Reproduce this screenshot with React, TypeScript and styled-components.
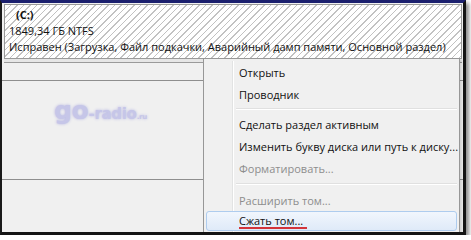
import styled, { createGlobalStyle } from "styled-components";

const GlobalStyle = createGlobalStyle`
  html, body {
    margin: 0;
    padding: 0;
    background: #ffffff;
  }
  body {
    font-family: "Open Sans", "Noto Sans", Arial, sans-serif;
  }
`;

const Frame = styled.div`
  position: relative;
  box-sizing: border-box;
  width: 466px;
  height: 235px;
  border-top: 3px solid #1c206e;
  border-left: 2px solid #1a1a1a;
  border-right: 3px solid #141414;
  border-bottom: 3px solid #141414;
  box-shadow: 3px 3px 4px rgba(0, 0, 0, 0.45);
  background: #f0f0f0;
  display: flex;
  flex-direction: column;
  overflow: hidden;
`;

const DiskBox = styled.div`
  margin: 1px 1px 0 2px;
  height: 55px;
  box-sizing: border-box;
  border: 1px solid #9a9a9a;
  padding: 2px 0 0 4px;
  background: repeating-linear-gradient(
    135deg,
    #ffffff 0 3.6px,
    #c2c2c2 3.6px 4.6px
  );
  color: #111;
  font-size: 11px;
  line-height: 16px;
`;

const DiskName = styled.div`
  font-weight: 700;
  padding-left: 7px;
`;

const DiskLine = styled.div`
  white-space: nowrap;
`;

const DiskFooter = styled.div`
  height: 3px;
  margin: 0 1px 0 2px;
  border-bottom: 1px solid #9a9a9a;
  background: #e6e6e6;
`;

const Lower = styled.div`
  flex: 1;
  display: flex;
  flex-direction: column;
`;

const Row = styled.div<{ $h: number }>`
  height: ${(p) => p.$h}px;
  border-bottom: 1px solid #8e8e8e;
  position: relative;
`;

const Watermark = styled.div`
  position: absolute;
  left: 52px;
  top: 15px;
  font-family: "DejaVu Sans", sans-serif;
  font-weight: 700;
  color: #c6c6e8;
  text-shadow: 0 0 3px #b4b4e2;
  letter-spacing: -0.3px;
  display: flex;
  align-items: baseline;
`;

const WmBig = styled.span`
  font-size: 25px;
`;

const WmSmall = styled.span`
  font-size: 15px;
`;

const WmTiny = styled.span`
  font-size: 7px;
`;

const Menu = styled.div`
  position: absolute;
  left: 201px;
  top: 55px;
  width: 257px;
  height: 180px;
  box-sizing: border-box;
  border: 1px solid #979797;
  background: #f0f0f0;
  padding: 2px;
  font-family: "Open Sans", "Noto Sans", sans-serif;
  font-size: 11px;
  color: #111;
  display: flex;
  flex-direction: column;
  box-shadow: 2px 2px 2px rgba(0, 0, 0, 0.12);

  &::before {
    content: "";
    position: absolute;
    top: 2px;
    bottom: 2px;
    left: 28px;
    width: 1px;
    background: #e2e3e3;
    border-right: 1px solid #ffffff;
  }
`;

const Item = styled.div<{ $disabled?: boolean; $active?: boolean }>`
  position: relative;
  flex: none;
  height: ${(p) => (p.$active ? 20 : 22)}px;
  box-sizing: border-box;
  padding-left: 32px;
  display: flex;
  align-items: center;
  color: ${(p) => (p.$disabled ? "#8d8d8d" : "#111")};
  border: 1px solid ${(p) => (p.$active ? "#aeccee" : "transparent")};
  border-radius: 3px;
  background: ${(p) =>
    p.$active ? "linear-gradient(#f1f6fd, #dfeaf8)" : "transparent"};
  white-space: nowrap;
`;

const Separator = styled.div<{ $h: number }>`
  position: relative;
  flex: none;
  height: ${(p) => p.$h}px;
  margin-left: 30px;
  &::after {
    content: "";
    position: absolute;
    left: 0;
    right: 0;
    top: ${(p) => Math.floor(p.$h / 2) - 1}px;
    height: 1px;
    background: #e0e0e0;
    border-bottom: 1px solid #ffffff;
  }
`;

const Marked = styled.span`
  display: inline-block;
  line-height: 12px;
  border-bottom: 2px solid #d3343a;
  padding: 0 4px 0 0;
  margin-top: 2px;
`;

export default function App() {
  return (
    <>
      <GlobalStyle />
      <Frame>
        <DiskBox>
          <DiskName>(C:)</DiskName>
          <DiskLine>1849,34 ГБ NTFS</DiskLine>
          <DiskLine>
            Исправен (Загрузка, Файл подкачки, Аварийный дамп памяти, Основной
            раздел)
          </DiskLine>
        </DiskBox>
        <DiskFooter />
        <Lower>
          <Row $h={17} />
          <Row $h={98}>
            <Watermark>
              <WmBig>go</WmBig>
              <WmSmall>-radio</WmSmall>
              <WmTiny>.ru</WmTiny>
            </Watermark>
          </Row>
        </Lower>
        <Menu>
          <Item>Открыть</Item>
          <Item>Проводник</Item>
          <Separator $h={8} />
          <Item>Сделать раздел активным</Item>
          <Item>Изменить букву диска или путь к диску...</Item>
          <Item $disabled>Форматировать...</Item>
          <Separator $h={10} />
          <Item $disabled>Расширить том...</Item>
          <Item $active>
            <Marked>Сжать том...</Marked>
          </Item>
        </Menu>
      </Frame>
    </>
  );
}
